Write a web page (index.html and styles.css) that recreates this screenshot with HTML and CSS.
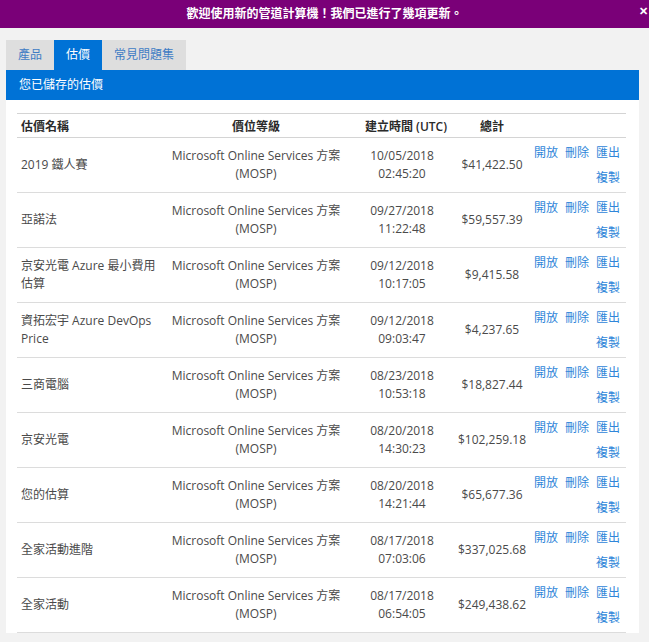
FILE: index.html
```html
<!DOCTYPE html>
<html lang="zh-Hant">
<head>
<meta charset="utf-8">
<link rel="stylesheet" href="styles.css">
</head>
<body>
<div class="banner">
  <span class="banner-text">歡迎使用新的管道計算機！我們已進行了幾項更新。</span>
  <span class="close">✕</span>
</div>
<div class="main">
  <div class="tabs">
    <div class="tab">產品</div>
    <div class="tab active">估價</div>
    <div class="tab">常見問題集</div>
  </div>
  <div class="panel">
    <div class="panel-head">您已儲存的估價</div>
    <div class="panel-body">
      <table class="est">
        <colgroup>
          <col class="c-name"><col class="c-tier"><col class="c-date"><col class="c-total"><col class="c-act">
        </colgroup>
        <thead>
          <tr><th class="left">估價名稱</th><th class="tier">價位等級</th><th>建立時間 (UTC)</th><th class="tot">總計</th><th></th></tr>
        </thead>
        <tbody>
          <tr><td class="left">2019 鐵人賽</td><td class="tier">Microsoft Online Services 方案 (MOSP)</td><td>10/05/2018 02:45:20</td><td class="tot">$41,422.50</td><td class="act"><a>開放</a><a>刪除</a><a>匯出</a><a>複製</a></td></tr>
          <tr><td class="left">亞諾法</td><td class="tier">Microsoft Online Services 方案 (MOSP)</td><td>09/27/2018 11:22:48</td><td class="tot">$59,557.39</td><td class="act"><a>開放</a><a>刪除</a><a>匯出</a><a>複製</a></td></tr>
          <tr><td class="left">京安光電 Azure 最小費用估算</td><td class="tier">Microsoft Online Services 方案 (MOSP)</td><td>09/12/2018 10:17:05</td><td class="tot">$9,415.58</td><td class="act"><a>開放</a><a>刪除</a><a>匯出</a><a>複製</a></td></tr>
          <tr><td class="left">資拓宏宇 Azure DevOps Price</td><td class="tier">Microsoft Online Services 方案 (MOSP)</td><td>09/12/2018 09:03:47</td><td class="tot">$4,237.65</td><td class="act"><a>開放</a><a>刪除</a><a>匯出</a><a>複製</a></td></tr>
          <tr><td class="left">三商電腦</td><td class="tier">Microsoft Online Services 方案 (MOSP)</td><td>08/23/2018 10:53:18</td><td class="tot">$18,827.44</td><td class="act"><a>開放</a><a>刪除</a><a>匯出</a><a>複製</a></td></tr>
          <tr><td class="left">京安光電</td><td class="tier">Microsoft Online Services 方案 (MOSP)</td><td>08/20/2018 14:30:23</td><td class="tot">$102,259.18</td><td class="act"><a>開放</a><a>刪除</a><a>匯出</a><a>複製</a></td></tr>
          <tr><td class="left">您的估算</td><td class="tier">Microsoft Online Services 方案 (MOSP)</td><td>08/20/2018 14:21:44</td><td class="tot">$65,677.36</td><td class="act"><a>開放</a><a>刪除</a><a>匯出</a><a>複製</a></td></tr>
          <tr><td class="left">全家活動進階</td><td class="tier">Microsoft Online Services 方案 (MOSP)</td><td>08/17/2018 07:03:06</td><td class="tot">$337,025.68</td><td class="act"><a>開放</a><a>刪除</a><a>匯出</a><a>複製</a></td></tr>
          <tr><td class="left">全家活動</td><td class="tier">Microsoft Online Services 方案 (MOSP)</td><td>08/17/2018 06:54:05</td><td class="tot">$249,438.62</td><td class="act"><a>開放</a><a>刪除</a><a>匯出</a><a>複製</a></td></tr>
        </tbody>
      </table>
    </div>
  </div>
</div>
</body>
</html>
```
FILE: styles.css
```css
html, body {
  margin: 0;
  padding: 0;
  background: #f2f2f2;
  font-family: "Open Sans", "Noto Sans CJK TC", sans-serif;
  font-size: 12px;
  color: #4a4a4a;
}
.banner {
  position: relative;
  height: 28px;
  background: #7a0078;
  color: #fff;
  text-align: center;
  line-height: 27px;
  font-weight: 600;
  font-size: 12px;
}
.close {
  position: absolute;
  right: 1px;
  top: -3px;
  font-size: 11px;
  font-weight: 700;
}
.main {
  padding: 12px 10px 0 6px;
}
.tabs {
  display: flex;
  height: 30px;
}
.tab {
  padding: 0 12px;
  line-height: 29px;
  background: #dedede;
  color: #3f7cc4;
  font-size: 12px;
}
.tab.active {
  background: #0072d6;
  color: #fff;
}
.panel {
  background: #fff;
}
.panel-head {
  height: 30px;
  line-height: 29px;
  background: #0072d6;
  color: #fff;
  padding-left: 13px;
}
.panel-body {
  padding: 13px 13px 0 11px;
}
.est {
  width: 609px;
  border-collapse: collapse;
  table-layout: fixed;
}
.c-name { width: 143px; }
.c-tier { width: 202px; }
.c-date { width: 80px; }
.c-total { width: 84px; }
.c-act { width: 100px; }
.est th {
  height: 23px;
  border-top: 1px solid #d4d4d4;
  border-bottom: 1px solid #d4d4d4;
  color: #2a2a2a;
  font-weight: 600;
  text-align: center;
  padding: 0 3px;
  vertical-align: middle;
  white-space: nowrap;
  overflow: visible;
}
.est td {
  height: 54px;
  border-bottom: 1px solid #dcdcdc;
  text-align: center;
  vertical-align: middle;
  line-height: 18px;
  padding: 0 3px;
}
.est th.left, .est td.left {
  text-align: left;
  padding-left: 4px;
  padding-right: 0;
}
.est th.tier, .est td.tier {
  padding-left: 0;
  padding-right: 10px;
}
.est .tot {
  padding-left: 16px;
  padding-right: 0;
}
.est td.act {
  text-align: right;
  padding-right: 6px;
  padding-left: 0;
  line-height: 25px;
}
.act a {
  display: inline-block;
  margin-left: 7px;
  color: #2f86d9;
}
```
